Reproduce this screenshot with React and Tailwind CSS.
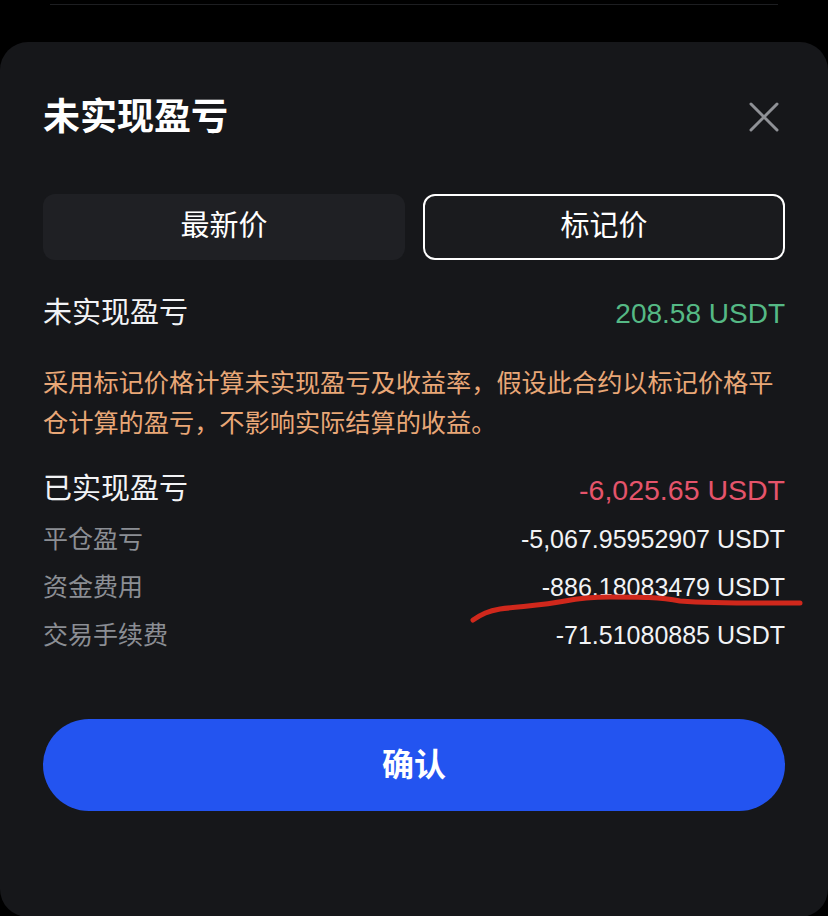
import React, { useState } from "react";

const FONT = { fontFamily: '"Liberation Sans", "Noto Sans CJK SC", sans-serif' };

function CloseIcon() {
  return (
    <svg width="30" height="30" viewBox="0 0 30 30" fill="none" aria-hidden="true">
      <path d="M2 2 L28 28 M28 2 L2 28" stroke="#8f9196" strokeWidth="3" strokeLinecap="round" />
    </svg>
  );
}

function DetailRow({ label, value }) {
  return (
    <div className="flex items-center justify-between h-[48px]">
      <span className="text-[25px] text-[#8b8e94]">{label}</span>
      <span className="text-[25px] text-[#f2f3f5]">{value}</span>
    </div>
  );
}

// 手写的红色下划线
function Scribble() {
  return (
    <svg
      className="absolute left-0 top-0 pointer-events-none"
      width="828"
      height="916"
      viewBox="0 0 828 916"
      fill="none"
    >
      <path
        d="M473 620 C 482 614, 488 611, 500 609 C 525 606, 545 605, 565 601 C 580 598, 590 597, 610 597 C 640 597, 660 597, 680 601 C 720 604, 760 603, 800 603"
        stroke="#d0281c"
        strokeWidth="5"
        strokeLinecap="round"
      />
    </svg>
  );
}

export default function App() {
  const [tab, setTab] = useState("mark");

  return (
    <div className="relative w-[828px] h-[916px] bg-black overflow-hidden" style={FONT}>
      <div className="mx-[50px] mt-[4px] h-px bg-[#1d1e21]" />
      <div className="mt-[37px] h-[875px] bg-[#16171a] rounded-[28px] px-[43px] pt-[49px]">
        {/* 标题 */}
        <div className="flex items-center justify-between h-[52px]">
          <h1 className="text-[37px] font-bold text-white leading-none">未实现盈亏</h1>
          <button type="button" className="mr-[6px]" aria-label="关闭">
            <CloseIcon />
          </button>
        </div>

        {/* 切换 */}
        <div className="mt-[51px] grid grid-cols-2 gap-[18px]">
          <button
            type="button"
            onClick={() => setTab("last")}
            className={[
              "h-[66px] rounded-[12px] text-[29px] text-white",
              tab === "last" ? "border-2 border-white bg-[#1a1b1e]" : "bg-[#1f2024]",
            ].join(" ")}
          >
            最新价
          </button>
          <button
            type="button"
            onClick={() => setTab("mark")}
            className={[
              "h-[66px] rounded-[12px] text-[29px] text-white",
              tab === "mark" ? "border-2 border-white bg-[#1a1b1e]" : "bg-[#1f2024]",
            ].join(" ")}
          >
            标记价
          </button>
        </div>

        {/* 未实现盈亏 */}
        <div className="mt-[34px] flex items-center justify-between h-[40px]">
          <span className="text-[29px] text-[#f2f3f5]">未实现盈亏</span>
          <span className="text-[28px] text-[#55b985]">208.58 USDT</span>
        </div>

        <p className="mt-[29px] mr-[-6px] text-[25.2px] leading-[40px] text-[#e9a777]">
          采用标记价格计算未实现盈亏及收益率，假设此合约以标记价格平仓计算的盈亏，不影响实际结算的收益。
        </p>

        {/* 已实现盈亏 */}
        <div className="mt-[27px] flex items-center justify-between h-[40px]">
          <span className="text-[29px] text-[#f2f3f5]">已实现盈亏</span>
          <span className="text-[28.5px] text-[#e5546b]">-6,025.65 USDT</span>
        </div>

        <div className="mt-[6px]">
          <DetailRow label="平仓盈亏" value="-5,067.95952907 USDT" />
          <DetailRow label="资金费用" value="-886.18083479 USDT" />
          <DetailRow label="交易手续费" value="-71.51080885 USDT" />
        </div>

        <button
          type="button"
          className="mt-[59px] w-full h-[92px] rounded-full bg-[#2354f0] text-white text-[32px] font-bold"
        >
          确认
        </button>
      </div>
      <Scribble />
    </div>
  );
}
